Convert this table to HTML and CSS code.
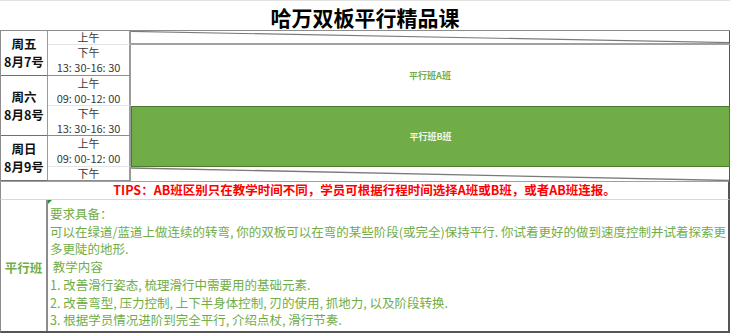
FILE: index.html
```html
<!DOCTYPE html>
<html lang="zh">
<head>
<meta charset="utf-8">
<link rel="stylesheet" href="styles.css">
</head>
<body>
<div class="sheet">
  <div class="title">哈万双板平行精品课</div>
  <div class="schedule">
    <div class="day d1"><span>周五</span><span>8月7号</span></div>
    <div class="time t1 soft"><span>上午</span></div>
    <div class="time t2 hard"><span>下午</span><span>13: 30-16: 30</span></div>
    <div class="day d2"><span>周六</span><span>8月8号</span></div>
    <div class="time t3 soft"><span>上午</span><span>09: 00-12: 00</span></div>
    <div class="time t4 hard"><span>下午</span><span>13: 30-16: 30</span></div>
    <div class="day d3"><span>周日</span><span>8月9号</span></div>
    <div class="time t5 soft"><span>上午</span><span>09: 00-12: 00</span></div>
    <div class="time t6 hard"><span>下午</span></div>

    <div class="diag diag-top">
      <svg viewBox="0 0 600 14" preserveAspectRatio="none"><line x1="0" y1="0.5" x2="600" y2="13.5" stroke="#7a7a7a" stroke-width="1.4"/></svg>
    </div>
    <div class="cls cls-a">平行班A班</div>
    <div class="cls cls-b">平行班B班</div>
    <div class="diag diag-bottom">
      <svg viewBox="0 0 600 14" preserveAspectRatio="none"><line x1="0" y1="1" x2="600" y2="13.5" stroke="#7a7a7a" stroke-width="1.4"/></svg>
    </div>
  </div>
  <div class="tips">TIPS：AB班区别只在教学时间不同，学员可根据行程时间选择A班或B班，或者AB班连报。</div>
  <div class="course">
    <div class="course-name">平行班</div>
    <div class="course-body">
      <div class="line">要求具备：</div>
      <div class="line">可以在绿道/蓝道上做连续的转弯, 你的双板可以在弯的某些阶段(或完全)保持平行. 你试着更好的做到速度控制并试着探索更</div>
      <div class="line">多更陡的地形.</div>
      <div class="line">&nbsp;教学内容</div>
      <div class="line">1. 改善滑行姿态, 梳理滑行中需要用的基础元素.</div>
      <div class="line">2. 改善弯型, 压力控制, 上下半身体控制, 刃的使用, 抓地力, 以及阶段转换.</div>
      <div class="line">3. 根据学员情况进阶到完全平行, 介绍点杖, 滑行节奏.</div>
    </div>
  </div>
</div>
</body>
</html>
```

FILE: styles.css
```css
* { box-sizing: border-box; }
html, body { margin: 0; padding: 0; background: #fff; }
body {
  width: 730px;
  height: 334px;
  overflow: hidden;
  font-family: "Noto Sans CJK SC", "Noto Sans", sans-serif;
}
.sheet {
  width: 730px;
  border-top: 1px solid #e2e2e2;
}
.title {
  height: 29px;
  display: flex;
  align-items: center;
  justify-content: center;
  font-size: 21px;
  font-weight: 700;
  color: #000;
  letter-spacing: 0;
  padding-top: 2px;
}
.schedule {
  display: grid;
  grid-template-columns: 47px 83px 600px;
  grid-template-rows: 14px 31px 30px 30px 31px 14px;
  border-top: 1px solid #8c8c8c;
  border-left: 1px solid #8c8c8c;
  width: 730px;
  margin-top: 0;
  position: relative;
}
.day {
  grid-column: 1;
  display: flex;
  flex-direction: column;
  align-items: center;
  justify-content: center;
  font-size: 12.5px;
  font-weight: 700;
  color: #111;
  line-height: 18px;
  border-right: 1px solid #9a9a9a;
  border-bottom: 1px solid #707070;
}
.d1 { grid-row: 1 / 3; }
.d2 { grid-row: 3 / 5; }
.d3 { grid-row: 5 / 7; }
.time {
  grid-column: 2;
  display: flex;
  flex-direction: column;
  align-items: center;
  justify-content: center;
  font-size: 11px;
  line-height: 15px;
  color: #3a3a3a;
  border-right: 2px solid #9a9a9a;
}
.time.soft { border-bottom: 1px solid #e4e4e4; }
.time.hard { border-bottom: 1px solid #8c8c8c; }
.t1 { grid-row: 1; }
.t2 { grid-row: 2; }
.t3 { grid-row: 3; }
.t4 { grid-row: 4; }
.t5 { grid-row: 5; }
.t6 { grid-row: 6; }
.diag {
  grid-column: 3;
  border-right: 2px solid #555;
}
.diag svg { display: block; width: 100%; height: 100%; }
.diag-top {
  grid-row: 1;
  border-bottom: 2px solid #a0a0a0;
}
.diag-bottom { grid-row: 6; }
.cls {
  grid-column: 3;
  display: flex;
  align-items: center;
  justify-content: center;
  font-size: 9px;
  font-weight: 700;
}
.cls-a {
  grid-row: 2 / 4;
  color: #70ad47;
  border-right: 2px solid #555;
}
.cls-b {
  grid-row: 4 / 6;
  color: #f4f9ef;
  background: #70ad47;
  border: 1px solid #4d7a2f;
  border-right: 2px solid #4d7a2f;
}
.tips {
  height: 19px;
  border-left: 1px solid #8c8c8c;
  border-right: 2px solid #555;
  border-bottom: 1px solid #d8d8d8;
  border-top: 1px solid #a0a0a0;
  color: #ff0000;
  font-size: 12.5px;
  font-weight: 700;
  display: flex;
  align-items: center;
  justify-content: center;
  padding-left: 0;
  line-height: 1;
}
.course {
  display: grid;
  grid-template-columns: 47px 1fr;
  height: 133px;
  border-left: 1px solid #8c8c8c;
  border-right: 2px solid #555;
  border-bottom: 2px solid #555;
}
.course-name {
  display: flex;
  align-items: center;
  justify-content: center;
  font-size: 12.5px;
  font-weight: 700;
  color: #70ad47;
  border-right: 2px solid #8c8c8c;
  padding-top: 4px;
}
.course-body {
  position: relative;
  padding: 5px 0 0 2px;
  color: #70ad47;
  font-size: 12.5px;
  line-height: 17.7px;
}
.course-body::before {
  content: "";
  position: absolute;
  left: 0;
  top: 0;
  border-top: 4px solid #2e8b2e;
  border-right: 4px solid transparent;
}
.line { white-space: nowrap; }
```
